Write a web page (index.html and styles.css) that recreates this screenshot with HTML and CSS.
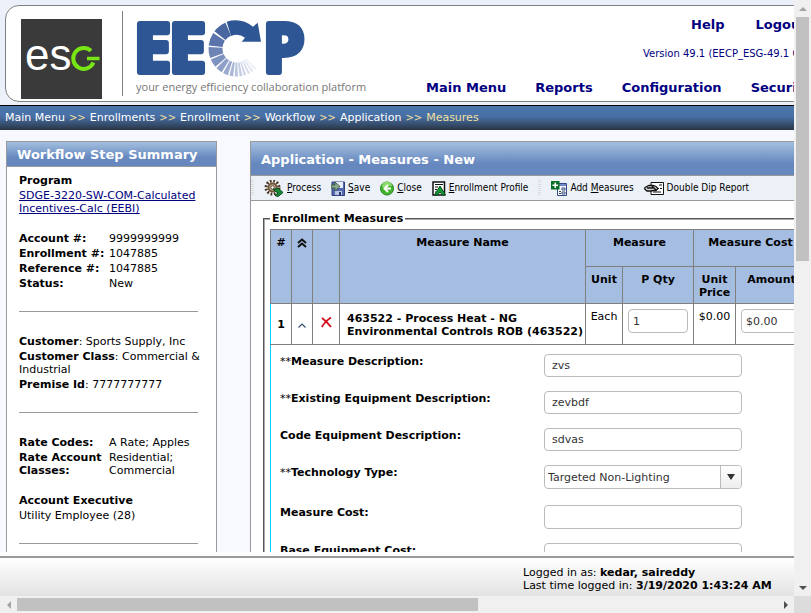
FILE: index.html
```html
<!DOCTYPE html>
<html lang="en">
<head>
<meta charset="utf-8">
<title>Application - Measures - New</title>
<link rel="stylesheet" href="styles.css">
</head>
<body>
<div class="viewport">
  <header class="top">
    <div class="masthead">
      <svg class="esg" viewBox="0 0 81 80" role="img" aria-label="esg">
        <rect width="81" height="80" fill="#3a3a3a"/>
        <text x="4" y="51" class="esg-text">es</text>
        <path d="M70 31.800A10.500 10.500 0 1 0 72.400 43.500" fill="none" stroke="#78e614" stroke-width="4"/>
        <path d="M66 39.500H78.500" stroke="#78e614" stroke-width="3.500"/>
      </svg>
      <span class="rule"></span>
      <svg class="eecp" viewBox="0 0 232 86" role="img" aria-label="EECP, your energy efficiency collaboration platform">
        <text x="-2" y="61" class="eecp-text">E</text>
        <text x="33" y="61" class="eecp-text">E</text>
        <text x="127" y="61" class="eecp-text">P</text>
        <path d="M90.700 10.700A28.500 28.500 0 0 1 117 15.700L121.700 11.700L125 30.700H105.700L109 26.700A14 14 0 0 0 95 25Z" fill="#2f5694"/>
        <g fill="none" stroke-width="14">
          <circle cx="100.500" cy="37.500" r="21" pathLength="360" stroke-dasharray="29 331" transform="rotate(218 100.500 37.500)" stroke="#4a689f"/>
          <circle cx="100.500" cy="37.500" r="21" pathLength="360" stroke-dasharray="28 332" transform="rotate(186 100.500 37.500)" stroke="#5a74ab"/>
          <circle cx="100.500" cy="37.500" r="21" pathLength="360" stroke-dasharray="23 337" transform="rotate(160 100.500 37.500)" stroke="#6d84b5"/>
          <circle cx="100.500" cy="37.500" r="21" pathLength="360" stroke-dasharray="18 342" transform="rotate(139 100.500 37.500)" stroke="#7e92c0"/>
          <circle cx="100.500" cy="37.500" r="21" pathLength="360" stroke-dasharray="14 346" transform="rotate(122 100.500 37.500)" stroke="#8e9fc8"/>
          <circle cx="100.500" cy="37.500" r="21" pathLength="360" stroke-dasharray="11 349" transform="rotate(108 100.500 37.500)" stroke="#9cabd0"/>
          <circle cx="100.500" cy="37.500" r="21" pathLength="360" stroke-dasharray="8 352" transform="rotate(97 100.500 37.500)" stroke="#a9b6d7"/>
          <circle cx="100.500" cy="37.500" r="21" pathLength="360" stroke-dasharray="7 353" transform="rotate(87 100.500 37.500)" stroke="#b8c3df"/>
          <circle cx="100.500" cy="37.500" r="21" pathLength="360" stroke-dasharray="6 354" transform="rotate(78 100.500 37.500)" stroke="#c2cce4"/>
          <circle cx="100.500" cy="37.500" r="21" pathLength="360" stroke-dasharray="5 355" transform="rotate(70 100.500 37.500)" stroke="#ccd4e9"/>
          <circle cx="100.500" cy="37.500" r="21" pathLength="360" stroke-dasharray="5 355" transform="rotate(61 100.500 37.500)" stroke="#d6dced"/>
          <circle cx="100.500" cy="37.500" r="21" pathLength="360" stroke-dasharray="5 355" transform="rotate(53 100.500 37.500)" stroke="#e2e7f3"/>
          <circle cx="100.500" cy="37.500" r="21" pathLength="360" stroke-dasharray="5 355" transform="rotate(45 100.500 37.500)" stroke="#edf0f8"/>
        </g>
        <text x="0" y="80" class="tagline">your energy efficiency collaboration platform</text>
      </svg>
      <div class="menus">
        <nav class="utility" aria-label="Account"><a href="#">Help</a><a href="#">Logout</a></nav>
        <p class="version">Version 49.1 (EECP_ESG-49.1 QA)</p>
        <nav class="primary" aria-label="Main"><a href="#">Main Menu</a><a href="#">Reports</a><a href="#">Configuration</a><a href="#">Security</a></nav>
      </div>
    </div>
  </header>
  <nav class="crumbs" aria-label="Breadcrumb"><a href="#">Main Menu</a><i>&gt;&gt;</i><a href="#">Enrollments</a><i>&gt;&gt;</i><a href="#">Enrollment</a><i>&gt;&gt;</i><a href="#">Workflow</a><i>&gt;&gt;</i><a href="#">Application</a><i>&gt;&gt;</i><b>Measures</b></nav>
  <div class="work">
    <aside class="panel side">
      <h2>Workflow Step Summary</h2>
      <div class="summary">
        <section>
          <h3>Program</h3>
          <p><a href="#">SDGE-3220-SW-COM-Calculated Incentives-Calc (EEBI)</a></p>
          <dl class="facts gap-top">
            <dt>Account #:</dt><dd>9999999999</dd>
            <dt>Enrollment #:</dt><dd>1047885</dd>
            <dt>Reference #:</dt><dd>1047885</dd>
            <dt>Status:</dt><dd>New</dd>
          </dl>
        </section>
        <hr>
        <section class="wide">
          <p><strong>Customer</strong>: Sports Supply, Inc</p>
          <p><strong>Customer Class</strong>: Commercial &amp; Industrial</p>
          <p><strong>Premise Id</strong>: 7777777777</p>
        </section>
        <hr>
        <section>
          <dl class="facts">
            <dt>Rate Codes:</dt><dd>A Rate; Apples</dd>
            <dt>Rate Account Classes:</dt><dd>Residential; Commercial</dd>
          </dl>
          <h3 class="gap-top">Account Executive</h3>
          <p>Utility Employee (28)</p>
        </section>
        <hr>
      </div>
    </aside>
    <main class="panel main">
      <h1>Application - Measures - New</h1>
      <div class="toolbar">
        <span class="grip"></span>
        <button type="button"><svg width="20" height="17" viewBox="0 0 20 17"><circle cx="8.500" cy="7.500" r="6.500" fill="none" stroke="#4b3520" stroke-width="3" stroke-dasharray="1.700 1.700"/><circle cx="8.500" cy="7.500" r="4" fill="#d9c7a8" stroke="#70563a" stroke-width="2"/><circle cx="8.500" cy="7.500" r="1.800" fill="#fff" stroke="#4b3520"/><path d="M9 9h3l2-1 5 4.500-5 4-3-1 3-2.500-3-2z" fill="#198a35" stroke="#08491b"/></svg><span><u>P</u>rocess</span></button>
        <button type="button"><svg width="14" height="15" viewBox="0 0 14 15"><path d="M1 1h12.500v13.500H1z" fill="#5367ad" stroke="#31417f"/><path d="M4 1h8v6H4z" fill="#e9eefb"/><path d="M4 10h7v4H4z" fill="#b9c4e4"/><path d="M8 11h2v3H8z" fill="#28386e"/><path d="M0 4h4V1l5 4.500L4 10V7H0z" fill="#8ca88f" stroke="#3e6048"/></svg><span><u>S</u>ave</span></button>
        <button type="button"><svg width="14" height="15" viewBox="0 0 14 15"><circle cx="7" cy="7.500" r="6.500" fill="#42b52d" stroke="#24831b"/><path d="M2 6a5 5 0 0 1 10-1c-3-1-6 2-10 1z" fill="#8add6d"/><path d="M8 4L4.500 7.500 8 11M5 7.500h6" fill="none" stroke="#fff" stroke-width="2"/></svg><span><u>C</u>lose</span></button>
        <button type="button"><svg width="14" height="15" viewBox="0 0 14 15"><path d="M1 1h11.500v13H1z" fill="#fff" stroke="#111" stroke-width="1.500"/><path d="M3 3.500h8M3 6h3M3 8.500h2M3 11h1" stroke="#111"/><path d="M2.500 14l5.500-9 5.500 9h-3l-2.500-3-2.500 3z" fill="#109b34" stroke="#064d16"/></svg><span><u>E</u>nrollment Profile</span></button>
        <span class="grip"></span>
        <button type="button"><svg width="16" height="15" viewBox="0 0 16 15"><path d="M6.500 2.500h9v12h-9z" fill="#f3f6ff" stroke="#344a86"/><path d="M7 3h8v2H7z" fill="#6f8acb"/><path d="M11 7h3v2h-3zM11 11h3v2h-3z" fill="#fff" stroke="#3c4f7d"/><path d="M8 10.500h2M8 12.500h2" stroke="#444"/><path d="M0 0h8.500v8.500H0z" fill="#087024"/><path d="M4.300 1.500v5.500M1.500 4.300H7" stroke="#fff" stroke-width="1.500"/></svg><span>Add <u>M</u>easures</span></button>
        <button type="button"><svg width="20" height="13" viewBox="0 0 20 13"><path d="M7 .5h12.500v12H7z" fill="#fff" stroke="#111"/><path d="M14 6.500h1M16 6.500h2M9 10h8M15 3h3" stroke="#111"/><path d="M1 5.500l4-2h4l3 1 2 2-2 2H9L7 9H3L.7 7z" fill="#ddd" stroke="#111" stroke-width="1.300"/><path d="M3 6h6M8 4l4 4" stroke="#111" stroke-width="1.500"/></svg><span>Double Dip Report</span></button>
      </div>
      <fieldset>
        <legend>Enrollment Measures</legend>
        <table>
          <colgroup><col class="c-num"><col class="c-num"><col class="c-del"><col class="c-name"><col class="c-unit"><col class="c-qty"><col class="c-price"><col class="c-amt"></colgroup>
          <thead>
            <tr><th rowspan="2">#</th><th rowspan="2"><svg class="chev" width="10" height="10" viewBox="0 0 10 10" role="img" aria-label="Collapse all"><path d="M1 5l4-3.500L9 5M1 9l4-3.500L9 9" fill="none" stroke="#111" stroke-width="2"/></svg></th><th rowspan="2"></th><th rowspan="2">Measure Name</th><th colspan="2">Measure</th><th colspan="2">Measure Cost</th></tr>
            <tr><th>Unit</th><th>P Qty</th><th>Unit Price</th><th>Amount</th></tr>
          </thead>
          <tbody>
            <tr class="item"><td class="mid"><strong>1</strong></td><td class="mid"><button type="button" class="bare" aria-label="Collapse"><svg width="8" height="5" viewBox="0 0 8 5"><path d="M.5 4.500L4 1l3.500 3.500" fill="none" stroke="#36506b" stroke-width="1.200"/></svg></button></td><td class="mid"><button type="button" class="bare" aria-label="Delete"><svg width="11" height="11" viewBox="0 0 11 11"><path d="M1 1c3 2 6 5 9 9M10 .5C6 3 3 6 .8 10" fill="none" stroke="#d0101c" stroke-width="1.900"/></svg></button></td><td class="name"><strong>463522 - Process Heat - NG<br>Environmental Controls ROB (463522)</strong></td><td>Each</td><td class="cell"><input class="box" aria-label="P Qty" value="1"></td><td>$0.00</td><td class="cell"><input class="box" aria-label="Amount" value="$0.00"></td></tr>
            <tr class="detail"><td colspan="8">
              <div class="form">
                <label for="f1"><span>**</span>Measure Description:</label><input id="f1" value="zvs">
                <label for="f2"><span>**</span>Existing Equipment Description:</label><input id="f2" value="zevbdf">
                <label for="f3">Code Equipment Description:</label><input id="f3" value="sdvas">
                <label for="f4"><span>**</span>Technology Type:</label><div class="pick"><select id="f4"><option>Targeted Non-Lighting</option></select><span class="drop"></span></div>
                <label for="f5">Measure Cost:</label><input id="f5" class="tall">
                <label for="f6">Base Equipment Cost:</label><input id="f6" class="tall">
              </div>
            </td></tr>
          </tbody>
        </table>
      </fieldset>
    </main>
  </div>
  <footer>
    <div class="login"><p>Logged in as: <strong>kedar, saireddy</strong></p><p>Last time logged in: <strong>3/19/2020 1:43:24 AM</strong></p></div>
  </footer>
</div>
<div class="bar vertical"><span class="arrow up off"></span><span class="thumb"></span><span class="arrow down"></span></div>
<div class="bar horizontal"><span class="arrow left off"></span><span class="thumb"></span><span class="arrow right"></span></div>
<div class="corner"></div>
</body>
</html>
```
FILE: styles.css
```css
* { box-sizing: border-box; }
body {
  margin: 0;
  height: 100vh;
  overflow: hidden;
  display: grid;
  grid-template: minmax(0, 1fr) 17px / minmax(0, 1fr) 17px;
  font: 11px/13px Verdana, "DejaVu Sans", sans-serif;
  color: #000;
}
p, h1, h2, h3, dl, dd { margin: 0; }
button, input, select { font: inherit; color: #333; }
.viewport {
  overflow: hidden;
  display: grid;
  grid-template-rows: auto auto minmax(0, 1fr) auto;
  background: #fdfdfe;
}
.top { background: #ecf0f9; padding: 5px 0 3px 5px; overflow: hidden; }
.masthead {
  width: 140%;
  height: 97px;
  display: flex;
  background: #fff;
  border: 1px solid #808080;
  border-radius: 14px;
  padding: 5px 15px;
}
.esg { width: 81px; height: 80px; margin-top: 8px; flex: none; }
.esg-text { font: 44px "Liberation Sans", Arial, sans-serif; fill: #fff; }
.rule { width: 1px; background: #808080; margin: 0 13px 0 20px; flex: none; }
.eecp { width: 232px; height: 86px; flex: none; }
.eecp-text { font: bold 66px "Open Sans", sans-serif; fill: #2f5694; stroke: #2f5694; stroke-width: 6; stroke-linejoin: round; }
.tagline { font: 11px "Open Sans", sans-serif; fill: #777; }
.menus { margin-left: 58px; padding-top: 6px; white-space: nowrap; }
.menus a { color: #000080; text-decoration: none; font-weight: bold; font-size: 13px; line-height: 16px; }
.utility { display: flex; gap: 31px; margin-left: 265px; }
.version { margin: 14px 0 20px 217px; color: #000080; font-size: 10px; }
.primary { display: flex; gap: 29px; }

.crumbs {
  display: flex;
  gap: 4px;
  height: 25px;
  padding: 0 5px;
  line-height: 23px;
  white-space: nowrap;
  border-top: 1px solid #000;
  background: linear-gradient(#4b77ad, #486fa5 45%, #293544);
}
.crumbs a { color: #fff; text-decoration: none; }
.crumbs i { color: #f0e0a0; font-style: normal; font-size: 10px; }
.crumbs b { color: #f0e0a0; font-weight: normal; }

.work {
  display: flex;
  gap: 33px;
  overflow: hidden;
  padding: 11px 0 0 6px;
  background: #f7f9fe;
}
.panel { background: #fff; border: 1px solid #999; border-bottom: 0; }
.panel h1, .panel h2 {
  font-size: 13px;
  color: #fff;
  padding: 2px 10px 0;
  background: linear-gradient(#a4bfdf, #6688bf 65%);
  border-bottom: 1px solid #999;
}
.side { width: 211px; flex: none; }
.side h2 { line-height: 22px; }
.summary { padding: 7px 18px 0 12px; }
.summary h3 { font-size: 11px; margin-bottom: 2px; }
.summary p + p { margin-top: 2px; }
.summary a { color: #000080; }
.summary .wide { margin-right: -12px; }
.facts { display: grid; grid-template-columns: 88px 1fr; column-gap: 2px; row-gap: 2px; }
.facts dt { font-weight: bold; }
.summary .gap-top { margin-top: 17px; }
hr { margin: 21px 0 23px; border: 0; border-top: 1px solid #999; }

.main { width: 140%; flex: none; }
.main h1 { line-height: 31px; }
.toolbar {
  display: flex;
  align-items: center;
  gap: 10px;
  height: 25px;
  background: #ecf0f7;
  border-bottom: 1px solid #999;
}
.toolbar button {
  display: flex;
  align-items: center;
  gap: 3px;
  padding: 0;
  border: 0;
  background: none;
  font: 10px/16px "DejaVu Sans Condensed", Tahoma, sans-serif;
  white-space: nowrap;
  color: #000;
}
.grip { width: 3px; height: 16px; background: repeating-linear-gradient(#ddd 0 1px, transparent 1px 2px); }

fieldset { margin: 11px 12px; padding: 4px 5px 5px; border: 2px groove #aaa; min-width: 0; }
legend { font-weight: bold; padding: 0 2px; }
table { table-layout: fixed; width: 538px; border-collapse: collapse; }
.c-num { width: 21px; }
.c-del { width: 27px; }
.c-name { width: 246px; }
.c-unit { width: 37px; }
.c-qty { width: 71px; }
.c-price { width: 42px; }
.c-amt { width: 72px; }
th { height: 37px; padding: 6px 0 0; vertical-align: top; background: #a5bde0; border: 1px solid #808080; }
.chev { margin-top: 2px; }
td { padding: 6px 0 0; vertical-align: top; text-align: center; border: 1px solid #808080; }
.item td { height: 41px; border-top-color: #00ccff; }
tbody td:first-child { border-left-color: #00ccff; }
td.mid { vertical-align: middle; padding: 0; }
td.name { vertical-align: middle; text-align: left; white-space: nowrap; padding: 2px 0 0 7px; }
td.cell { padding: 5px; }
.bare { border: 0; padding: 0; background: none; }
input, select { width: 100%; height: 23px; padding: 0 7px; border: 1px solid #bbb; border-radius: 4px; background: #fff; }
.box, .tall { height: 24px; }
.box { padding: 0 4px; }
.detail td { text-align: left; padding: 9px 9px 14px; }
.form { display: grid; grid-template-columns: 264px 198px; row-gap: 14px; }
.form label { font-weight: bold; padding-top: 1px; }
.form label span { font-weight: normal; }
.pick { display: flex; height: 26px; position: relative; }
.pick select { appearance: none; height: 24px; padding: 0 3px; }
.drop {
  position: absolute;
  top: 1px;
  right: 1px;
  width: 21px;
  height: 22px;
  display: grid;
  place-items: center;
  border-left: 1px solid #bbb;
  border-radius: 0 3px 3px 0;
  background: linear-gradient(#fff, #eee);
  pointer-events: none;
}
.drop::after { content: ""; border: 4px solid transparent; border-top: 6px solid #333; border-bottom: 0; }

footer { border-top: 2px solid #999; background: linear-gradient(#fff, #e2e2e2); margin-top: 4px; height: 40px; padding-top: 8px; display: flex; justify-content: flex-end; }
.login { width: 271px; white-space: nowrap; }

.bar { display: flex; align-items: center; background: #f0f0f0; }
.vertical { flex-direction: column; }
.horizontal { grid-row: 2; }
.thumb { background: #c1c1c1; }
.vertical .thumb { width: 13px; height: 41%; }
.horizontal .thumb { height: 13px; width: 58%; }
.arrow { width: 17px; height: 17px; flex: none; display: grid; place-items: center; color: #505050; }
.arrow::after { content: ""; border: 4px solid transparent; }
.off { color: #a3a3a3; }
.up::after { border-top: 0; border-bottom-color: currentColor; }
.down::after { border-bottom: 0; border-top-color: currentColor; }
.left::after { border-left: 0; border-right-color: currentColor; }
.right::after { border-right: 0; border-left-color: currentColor; }
.down { margin-top: auto; }
.right { margin-left: auto; }
.corner { background: #dcdcdc; }
```
